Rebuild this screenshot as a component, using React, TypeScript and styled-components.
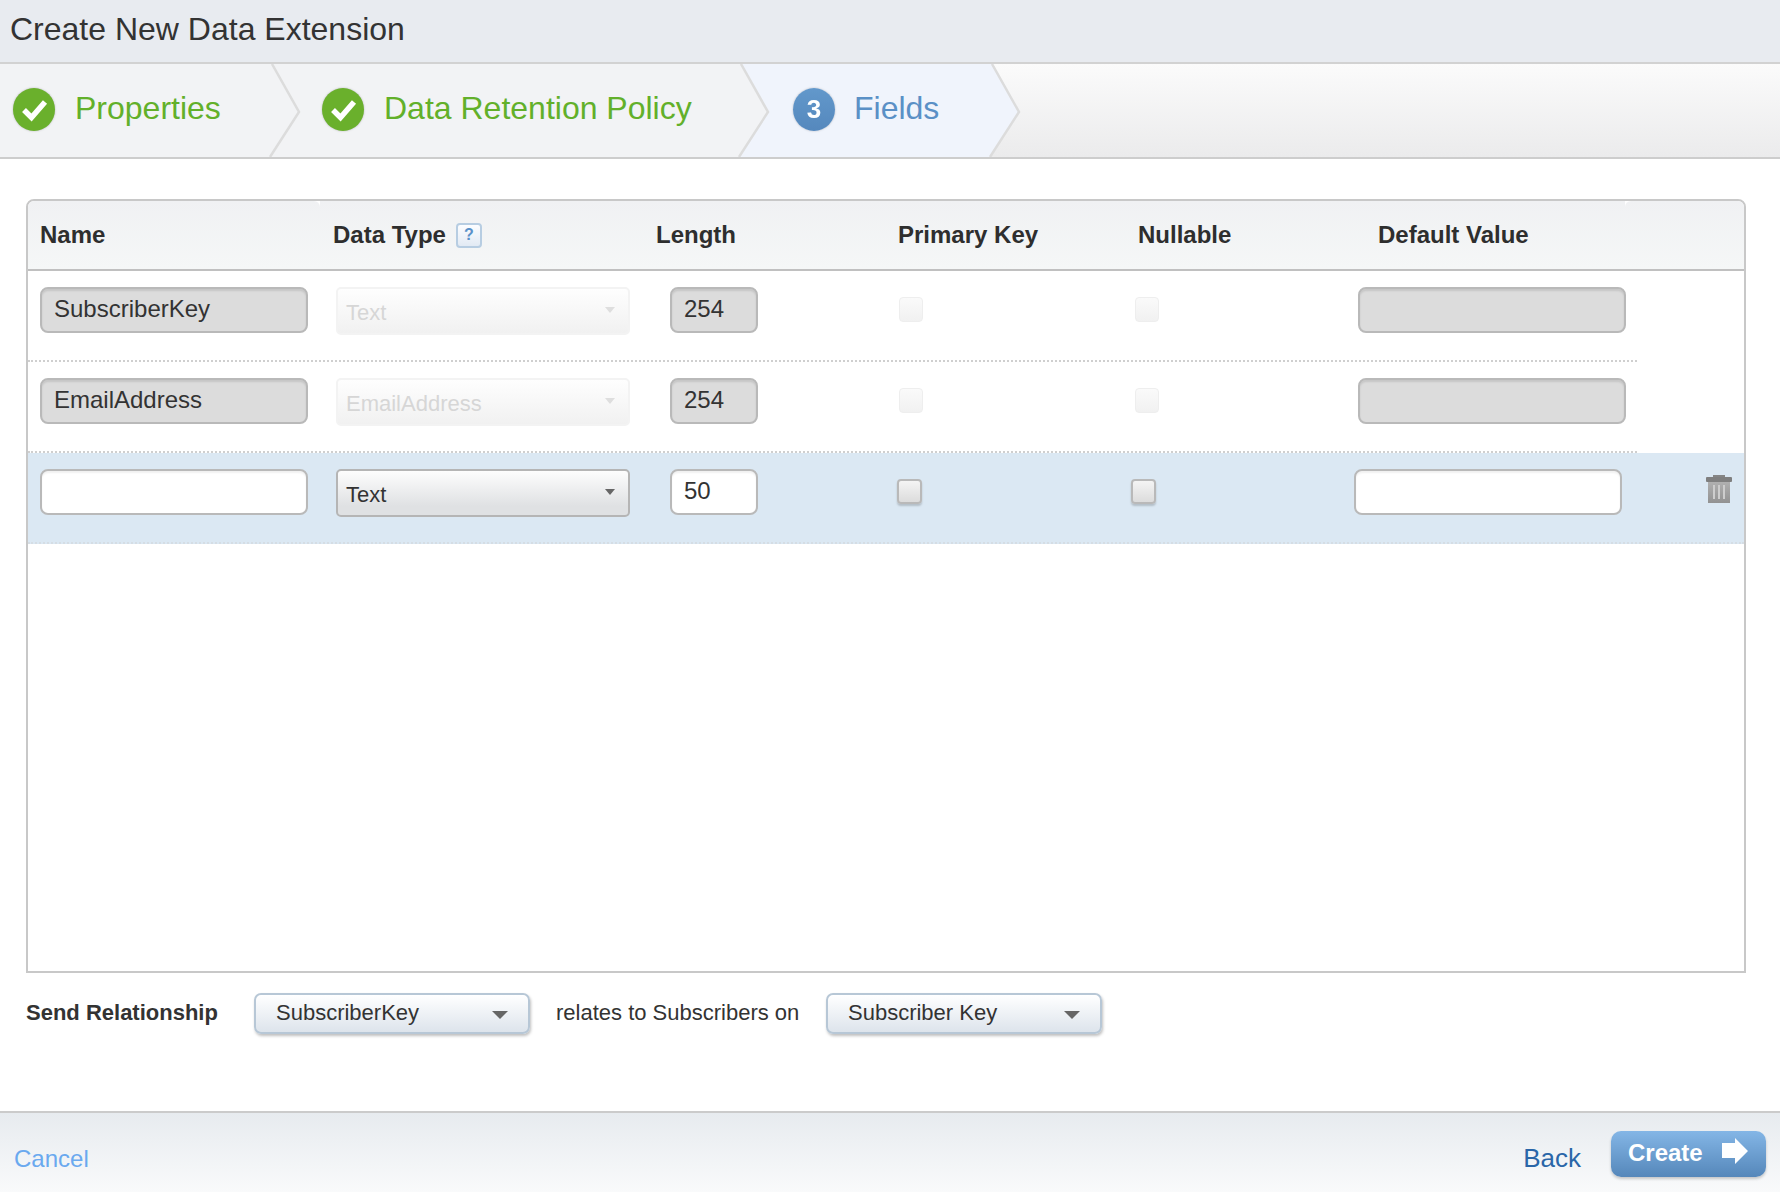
import React from "react";
import styled, { createGlobalStyle } from "styled-components";

const Global = createGlobalStyle`
  html, body { margin: 0; padding: 0; background: #fff; }
  body { font-family: "Liberation Sans", Arial, sans-serif; color: #333; overflow: hidden; }
  * { box-sizing: border-box; }
`;

const Page = styled.div`
  width: 1780px;
  height: 1192px;
  display: flex;
  flex-direction: column;
  overflow: hidden;
`;

const TitleBar = styled.header`
  height: 64px;
  flex: none;
  padding: 0 0 4px 10px;
  display: flex;
  align-items: center;
  background: #e8ebf0;
  border-bottom: 2px solid #d2d2d2;
  font-size: 32px;
  color: #333;
`;

const WizardBar = styled.nav`
  height: 95px;
  flex: none;
  display: flex;
  background: linear-gradient(#fbfbfb, #ebebec);
  border-bottom: 2px solid #cdcdcd;
`;

const Step = styled.div<{ $w: number; $z: number; $gap: number; $pad: number }>`
  position: relative;
  width: ${(p) => p.$w}px;
  height: 93px;
  margin-left: ${(p) => p.$gap}px;
  padding: 24px 0 0 ${(p) => p.$pad}px;
  z-index: ${(p) => p.$z};
  display: flex;
  align-items: flex-start;
`;

const StepShape = styled.svg`
  position: absolute;
  left: 0;
  top: 0;
  z-index: -1;
`;

const StepBadge = styled.div<{ $blue?: boolean }>`
  width: 42px;
  height: 43px;
  flex: none;
  border-radius: 50%;
  background: ${(p) => (p.$blue ? "linear-gradient(#6298cb, #5588bd)" : "#6ab02c")};
  box-shadow: 0 0 2px rgba(60, 60, 60, 0.35);
  filter: blur(0.4px);
  display: flex;
  align-items: center;
  justify-content: center;
  color: #fff;
  font-size: 26px;
  font-weight: bold;
`;

const StepLabel = styled.span<{ $blue?: boolean }>`
  margin: 1px 0 0 ${(p) => (p.$blue ? 19 : 20)}px;
  font-size: 32px;
  line-height: 38px;
  color: ${(p) => (p.$blue ? "#5a90c6" : "#62b02a")};
  white-space: nowrap;
`;

const Content = styled.main`
  flex: 1;
  padding: 40px 0 0 26px;
  background: #fff;
`;

const TableBox = styled.section`
  width: 1720px;
  height: 774px;
  border: 2px solid #c8c8c8;
  border-radius: 8px 8px 0 0;
  background: #fff;
`;

const HeadRow = styled.div`
  display: grid;
  grid-template-columns: 292px 323px 242px 240px 240px 260px 1fr;
  height: 70px;
  border-bottom: 2px solid #c0c0c0;
`;

const HeadCell = styled.div`
  display: flex;
  align-items: center;
  padding-left: 13px;
  background: linear-gradient(#f0f1f3, #f5f7f7);
  font-size: 24px;
  font-weight: bold;
  color: #2e2e2e;
  white-space: nowrap;

  &:first-child {
    padding-left: 12px;
    border-radius: 6px 6px 0 0;
  }

  &:last-child {
    border-radius: 6px 6px 0 0;
  }
`;

const HelpMark = styled.span`
  width: 26px;
  height: 25px;
  margin-left: 10px;
  border: 2px solid #b7cde2;
  border-radius: 4px;
  background: linear-gradient(#fcfdff, #e2eaf4);
  color: #5a91c9;
  font-size: 16px;
  font-weight: bold;
  display: flex;
  align-items: center;
  justify-content: center;
`;

const Row = styled.div<{ $active?: boolean }>`
  display: grid;
  grid-template-columns: ${(p) =>
    p.$active ? "296px 334px 227px 234px 223px 352px 26px" : "296px 334px 229px 236px 223px 268px"};
  height: 91px;
  width: ${(p) => (p.$active ? "1716px" : "1609px")};
  padding: 16px 0 0 12px;
  align-items: start;
  background: ${(p) => (p.$active ? "#dbe8f3" : "#fff")};
  border-bottom: 2px dotted ${(p) => (p.$active ? "#d5dde4" : "#cfcfcf")};
`;

const TextField = styled.div<{ $locked?: boolean; $w: number }>`
  width: ${(p) => p.$w}px;
  height: 46px;
  padding: 0 0 3px 12px;
  display: flex;
  align-items: center;
  border: 2px solid #b9b9b9;
  border-radius: 8px;
  background: ${(p) => (p.$locked ? "#dcdcdc" : "#fff")};
  box-shadow: inset 0 2px 2px rgba(0, 0, 0, ${(p) => (p.$locked ? 0.1 : 0.06)});
  font-size: 24px;
  color: #333;
`;

const TypeSelect = styled.div<{ $locked?: boolean }>`
  width: 294px;
  height: 48px;
  padding: 4px 13px 0 8px;
  display: flex;
  align-items: center;
  justify-content: space-between;
  border: 2px solid ${(p) => (p.$locked ? "#f3f3f3" : "#b5b5b5")};
  border-radius: 5px;
  background: ${(p) =>
    p.$locked ? "linear-gradient(#fefefe, #f1f1f1)" : "linear-gradient(#fdfdfd, #dfe1e3 80%)"};
  font-size: 22px;
  color: ${(p) => (p.$locked ? "#d6d6d6" : "#333")};
`;

const Caret = styled.i<{ $w: number; $color: string; $drop: number }>`
  flex: none;
  width: 0;
  height: 0;
  transform: translateY(${(p) => p.$drop}px);
  border-left: ${(p) => p.$w / 2}px solid transparent;
  border-right: ${(p) => p.$w / 2}px solid transparent;
  border-top: ${(p) => Math.round(p.$w * 0.5)}px solid ${(p) => p.$color};
`;

const Check = styled.div<{ $locked?: boolean }>`
  width: ${(p) => (p.$locked ? 24 : 25)}px;
  height: 25px;
  margin-top: 10px;
  border-radius: 4px;
  border: ${(p) => (p.$locked ? "1px solid #eeeeee" : "2px solid #b9b9b9")};
  background: ${(p) =>
    p.$locked ? "linear-gradient(#fafafa, #f1f1f1)" : "linear-gradient(#f4f4f4, #dcdcdc)"};
  box-shadow: ${(p) => (p.$locked ? "none" : "0 2px 2px rgba(0,0,0,0.18)")};
`;

const TrashIcon = styled.svg`
  display: block;
  margin-top: 6px;
`;

const RelationRow = styled.div`
  display: flex;
  align-items: center;
  height: 41px;
  margin-top: 20px;
  font-size: 22px;
  color: #333;
  white-space: nowrap;
`;

const RelationLabel = styled.span`
  width: 228px;
  font-weight: bold;
  padding-bottom: 1px;
`;

const RelationText = styled.span`
  width: 296px;
  padding: 0 0 1px 26px;
  flex: none;
`;

const RelationSelect = styled.div<{ $w: number }>`
  width: ${(p) => p.$w}px;
  height: 41px;
  flex: none;
  padding: 0 20px 2px 20px;
  display: flex;
  align-items: center;
  justify-content: space-between;
  border: 2px solid #b7c7d6;
  border-radius: 7px;
  background: linear-gradient(#ffffff, #dde4ec);
  box-shadow: 1px 2px 3px rgba(0, 0, 0, 0.25);
`;

const Footer = styled.footer`
  height: 81px;
  flex: none;
  padding: 18px 14px 0;
  display: flex;
  align-items: flex-start;
  border-top: 2px solid #cbcbcb;
  background: linear-gradient(#e7ebef, #f9fafb);
`;

const CancelLink = styled.a`
  margin-top: 13px;
  font-size: 24px;
  line-height: 30px;
  color: #6aa9ef;
`;

const BackLink = styled.a`
  margin: 12px 30px 0 auto;
  font-size: 26px;
  line-height: 30px;
  color: #2a66a8;
`;

const CreateButton = styled.button`
  width: 155px;
  height: 46px;
  padding: 0 18px 2px 17px;
  display: flex;
  align-items: center;
  justify-content: space-between;
  border: 0;
  border-radius: 10px;
  background: linear-gradient(#84b6e6, #5587ba);
  box-shadow: 0 2px 3px rgba(0, 0, 0, 0.2);
  color: #fff;
  font-family: inherit;
  font-size: 24px;
  font-weight: bold;
`;

const ArrowIcon = styled.svg`
  margin-top: -4px;
`;

const CheckMark = () => (
  <svg width="42" height="43" viewBox="0 0 42 43" aria-hidden="true">
    <path d="M11 22 L18.5 29.5 L32 14" fill="none" stroke="#fff" strokeWidth="5.5" />
  </svg>
);

const Shape = ({ w, fill }: { w: number; fill: string }) => (
  <StepShape width={w + 2} height={93} viewBox={`0 0 ${w + 2} 93`} aria-hidden="true">
    <path d={`M0 0H${w - 27}L${w} 48L${w - 29} 93H0Z`} fill={fill} />
    <path d={`M${w - 27} 0L${w} 48L${w - 29} 93`} fill="none" stroke="#dcdcdc" strokeWidth="2.5" />
  </StepShape>
);

const Trash = () => (
  <TrashIcon width="26" height="28" viewBox="0 0 26 28" aria-hidden="true">
    <defs>
      <linearGradient id="bin" x1="0" y1="0" x2="0" y2="1">
        <stop offset="0" stopColor="#b0b0b0" />
        <stop offset="1" stopColor="#929292" />
      </linearGradient>
    </defs>
    <rect x="7" y="0" width="12" height="3" fill="#858585" />
    <rect x="0" y="2" width="26" height="5" rx="1" fill="#7f7f7f" />
    <rect x="2" y="7" width="22" height="21" fill="url(#bin)" />
    <rect x="7" y="10" width="2" height="14" fill="#cdcdcd" />
    <rect x="12" y="10" width="2" height="14" fill="#cdcdcd" />
    <rect x="17" y="10" width="2" height="14" fill="#cdcdcd" />
  </TrashIcon>
);

const BigArrow = () => (
  <ArrowIcon width="26" height="26" viewBox="0 0 26 26" aria-hidden="true">
    <path d="M0 5H13V0L26 13L13 26V20H0Z" fill="#fff" />
  </ArrowIcon>
);

const lockedRows = [
  { name: "SubscriberKey", type: "Text" },
  { name: "EmailAddress", type: "EmailAddress" },
];

export default function App() {
  return (
    <Page>
      <Global />
      <TitleBar>Create New Data Extension</TitleBar>
      <WizardBar>
        <Step $w={299} $z={3} $gap={0} $pad={13}>
          <Shape w={299} fill="#f2f3f5" />
          <StepBadge>
            <CheckMark />
          </StepBadge>
          <StepLabel>Properties</StepLabel>
        </Step>
        <Step $w={498} $z={2} $gap={-29} $pad={52}>
          <Shape w={498} fill="#f2f3f5" />
          <StepBadge>
            <CheckMark />
          </StepBadge>
          <StepLabel>Data Retention Policy</StepLabel>
        </Step>
        <Step $w={279} $z={1} $gap={-28} $pad={53}>
          <Shape w={279} fill="#f0f4fc" />
          <StepBadge $blue>3</StepBadge>
          <StepLabel $blue>Fields</StepLabel>
        </Step>
      </WizardBar>
      <Content>
        <TableBox>
          <HeadRow>
            <HeadCell>Name</HeadCell>
            <HeadCell>
              Data Type<HelpMark>?</HelpMark>
            </HeadCell>
            <HeadCell>Length</HeadCell>
            <HeadCell>Primary Key</HeadCell>
            <HeadCell>Nullable</HeadCell>
            <HeadCell>Default Value</HeadCell>
            <HeadCell />
          </HeadRow>
          {lockedRows.map((r) => (
            <Row key={r.name}>
              <TextField $locked $w={268}>{r.name}</TextField>
              <TypeSelect $locked>
                {r.type}
                <Caret $w={11} $color="#dedede" $drop={-3} />
              </TypeSelect>
              <TextField $locked $w={88}>254</TextField>
              <Check $locked />
              <Check $locked />
              <TextField $locked $w={268} />
            </Row>
          ))}
          <Row $active>
            <TextField $w={268} />
            <TypeSelect>
              Text
              <Caret $w={11} $color="#666" $drop={-3} />
            </TypeSelect>
            <TextField $w={88}>50</TextField>
            <Check />
            <Check />
            <TextField $w={268} />
            <Trash />
          </Row>
        </TableBox>
        <RelationRow>
          <RelationLabel>Send Relationship</RelationLabel>
          <RelationSelect $w={276}>
            SubscriberKey
            <Caret $w={16} $color="#666" $drop={2} />
          </RelationSelect>
          <RelationText>relates to Subscribers on</RelationText>
          <RelationSelect $w={276}>
            Subscriber Key
            <Caret $w={16} $color="#666" $drop={2} />
          </RelationSelect>
        </RelationRow>
      </Content>
      <Footer>
        <CancelLink>Cancel</CancelLink>
        <BackLink>Back</BackLink>
        <CreateButton>
          Create
          <BigArrow />
        </CreateButton>
      </Footer>
    </Page>
  );
}
